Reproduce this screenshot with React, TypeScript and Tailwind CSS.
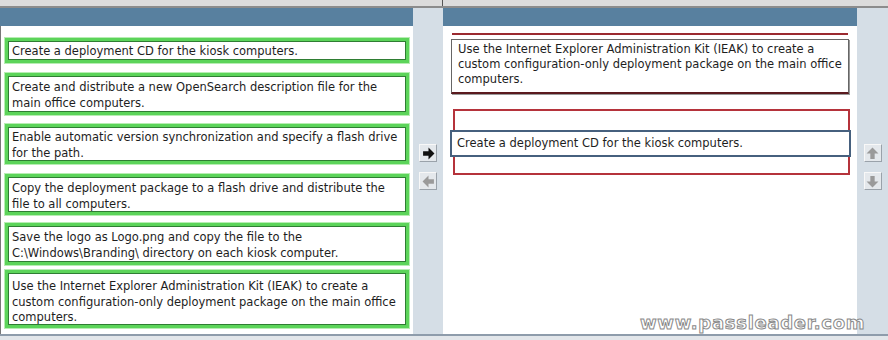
const font = "font-['DejaVu_Sans',Verdana,sans-serif]";

const leftItems = [
  { text: "Create a deployment CD for the kiosk computers.", cls: "mt-[12px] h-[25px] pt-[2px]" },
  { text: "Create and distribute a new OpenSearch description file for the main office computers.", cls: "mt-[10px] h-[42px] pt-[3px]" },
  { text: "Enable automatic version synchronization and specify a flash drive for the path.", cls: "mt-[9px] h-[40px] pt-[2px]" },
  { text: "Copy the deployment package to a flash drive and distribute the file to all computers.", cls: "mt-[10px] h-[41px] pt-[3px]" },
  { text: "Save the logo as Logo.png and copy the file to the C:\\Windows\\Branding\\ directory on each kiosk computer.", cls: "mt-[8px] h-[42px] pt-[3px]" },
  { text: "Use the Internet Explorer Administration Kit (IEAK) to create a custom configuration-only deployment package on the main office computers.", cls: "mt-[5px] h-[58px] pt-[6px] leading-[15.5px]" },
];

function Arrow({ dir, dark }: { dir: "right" | "left" | "up" | "down"; dark?: boolean }) {
  const rot = { right: 0, left: 180, up: 270, down: 90 }[dir];
  return (
    <div className="w-[18px] h-[18px] bg-[#e4e8ec] border border-t-[#f8f8f8] border-l-[#f8f8f8] border-r-[#9aa2aa] border-b-[#9aa2aa] flex items-center justify-center">
      <svg width="13" height="13" viewBox="0 0 12 12" style={{ transform: `rotate(${rot}deg)` }}>
        <polygon points="1,4 6,4 6,0.5 11.5,6 6,11.5 6,8 1,8" fill={dark ? "#111" : "#9a9a9a"} />
      </svg>
    </div>
  );
}

export default function App() {
  return (
    <div className={`relative w-[888px] h-[340px] overflow-hidden bg-[#d5dee6] text-[11.5px] leading-[16px] text-[#1e1e1e] ${font}`}>
      {/* cut-off strip at the top */}
      <div className="h-[8px] bg-[#dcdcdc] border-b-2 border-[#8c8c8c] flex">
        <div className="w-[443px] border-r border-[#555]" />
      </div>

      <div className="flex h-[326px]">
        {/* left list */}
        <div className="w-[413px] flex flex-col">
          <div className="h-[18px] bg-[#58809f]" />
          <div className="flex-1 bg-white px-[4px] flex flex-col border-l border-[#777]">
            {leftItems.map((it, i) => (
              <div
                key={i}
                className={`w-[404px] bg-white border-[3px] border-[#5cd45a] outline outline-1 outline-[#b7edb3] shadow-[inset_0_0_0_1px_#2f7d33] pl-[4px] pr-[6px] ${it.cls}`}
              >
                {it.text}
              </div>
            ))}
          </div>
        </div>

        {/* middle buttons */}
        <div className="w-[30px] flex flex-col items-center gap-[10px] pt-[136px]">
          <Arrow dir="right" dark />
          <Arrow dir="left" />
        </div>

        {/* right target area */}
        <div className="w-[414px] flex flex-col">
          <div className="h-[18px] bg-[#58809f]" />
          <div className="flex-1 bg-white flex flex-col px-[8px]">
            <div className="mt-[7px] h-[2px] bg-[#9b2a30] mx-[1px]" />
            <div className="mt-[4px] border border-[#666] border-b-2 border-b-[#5a1a1e] bg-white pl-[6px] pr-[4px] pt-[2px] pb-[5px] leading-[15px] shadow-[1px_1px_0_#999]">
              Use the Internet Explorer Administration Kit (IEAK) to create a custom configuration-only deployment package on the main office computers.
            </div>
            <div className="mt-[15px] h-[66px] ml-[2px] mr-[-1px] border-2 border-[#b5333b] pt-[19px]">
              <div className="-ml-[5px] -mr-[3px] h-[27px] bg-white border-2 border-[#46607e] pl-[5px] pt-[3px]">
                Create a deployment CD for the kiosk computers.
              </div>
            </div>
          </div>
        </div>

        {/* right buttons */}
        <div className="w-[31px] flex flex-col items-center gap-[10px] pt-[136px]">
          <Arrow dir="up" />
          <Arrow dir="down" />
        </div>
      </div>

      <div className="h-[6px] border-t-2 border-[#8e9cab] bg-[#e2e6ea]" />

      <div className="absolute left-[640px] top-[313px] text-[18px] leading-[20px] font-bold tracking-[0.7px] text-white [-webkit-text-stroke:1px_#8a8a8a] font-['DejaVu_Sans',sans-serif]">
        www.passleader.com
      </div>
    </div>
  );
}
